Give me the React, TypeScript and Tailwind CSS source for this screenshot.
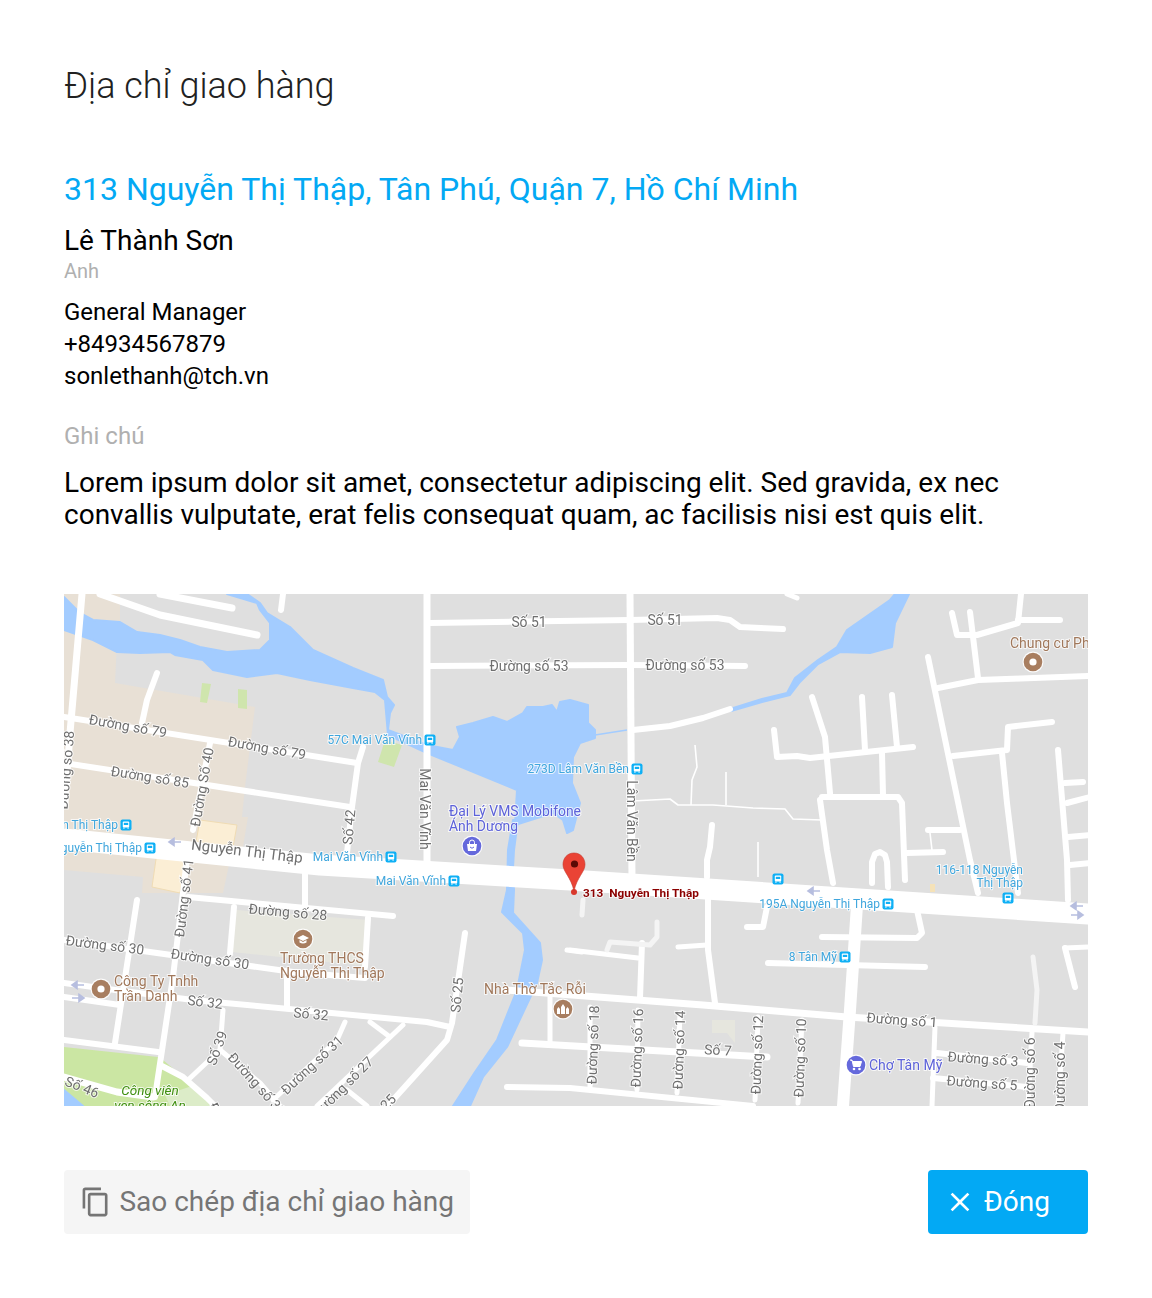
import { Fragment } from 'react';

// map roads in page coordinates: [points, width]
const roads: [string, number][] = [
  ['64,839 320,865 570,880 1088,914', 21],
  ['427,594 427,872', 7],
  ['630,594 632,880', 7],
  ['430,623 630,620 717,618 730,620 740,627 783,629', 6],
  ['430,666 630,665 745,666', 6],
  ['633,730 670,726 703,718 730,709', 6],
  ['787,594 797,598', 5],
  ['952,613 957,635 977,635 1018,623 1021,594', 6],
  ['1018,620 1060,620', 6],
  ['970,612 978,678', 6],
  ['928,657 970,860 978,893', 6],
  ['938,688 978,680 1090,676', 6],
  ['1052,722 1008,727 1007,750 953,756', 6],
  ['1002,753 1007,803 1018,893', 6],
  ['1058,750 1067,860 1068,900', 6],
  ['1065,783 1083,782', 6],
  ['1067,803 1090,797', 6],
  ['1068,837 1090,835', 6],
  ['1070,865 1090,863', 6],
  ['812,697 825,737 830,793', 6],
  ['862,697 865,750', 6],
  ['892,695 897,747', 6],
  ['774,730 777,757 797,756 810,758 913,747', 6],
  ['882,753 883,795', 6],
  ['822,797 898,797 902,803 905,880', 6],
  ['820,800 827,850 833,883', 6],
  ['928,830 960,830', 6],
  ['907,853 943,852', 6],
  ['872,883 872,862 875,854 880,852 885,855 887,862 888,887', 6],
  ['712,825 710,847 707,860 707,877', 6],
  ['708,898 708,950 715,1003', 6],
  ['678,947 707,945', 5],
  ['747,927 763,927 767,907', 6],
  ['822,937 917,938 922,933 917,910', 6],
  ['768,963 925,967', 6],
  ['857,905 850,1010 843,1106', 12],
  ['505,990 703,1005 847,1017 1088,1032', 7],
  ['567,950 582,952', 5],
  ['522,1043 767,1057', 7],
  ['507,1087 570,1088 753,1106', 6],
  ['550,997 550,1043', 5],
  ['642,943 640,998', 6],
  ['570,950 638,958', 5],
  ['590,1007 590,1087', 5],
  ['638,1010 637,1090', 5],
  ['680,1013 677,1093', 5],
  ['758,1017 755,1100', 5],
  ['802,1020 798,1103', 5],
  ['935,1027 932,1106', 5],
  ['937,1053 1027,1063', 6],
  ['933,1078 1027,1087', 6],
  ['1032,1032 1028,1106', 5],
  ['1063,1033 1058,1106', 5],
  ['1065,948 1075,987', 6],
  ['1065,948 1090,947', 5],
  ['82,594 70,733 65,803', 7],
  ['100,594 160,615 257,635', 7],
  ['160,594 232,608', 7],
  ['283,594 281,610', 6],
  ['157,673 147,700 142,723', 6],
  ['64,717 357,763', 6],
  ['64,763 350,807', 6],
  ['363,747 358,763 352,807 347,853', 6],
  ['210,743 193,830', 6],
  ['188,850 173,977 155,1097', 6],
  ['137,900 115,1043', 6],
  ['188,897 393,916', 6],
  ['305,870 305,907', 6],
  ['234,907 230,953', 6],
  ['368,918 365,967', 6],
  ['64,940 293,972 365,978', 6],
  ['287,977 287,1007', 6],
  ['64,983 100,988', 6],
  ['64,997 120,1005', 6],
  ['193,1000 427,1022 450,1027', 6],
  ['100,988 193,1000', 6],
  ['223,1010 220,1050', 5],
  ['220,1050 188,1080', 5],
  ['220,1050 260,1083 280,1106', 5],
  ['345,1022 337,1040 273,1100', 5],
  ['370,1022 390,1037', 5],
  ['403,1025 317,1106', 5],
  ['465,933 452,1023 447,1040 393,1100 387,1106', 6],
  ['347,1090 367,1106', 5],
  ['64,1040 158,1052', 6],
  ['160,1065 183,1077 207,1098 215,1106', 6],
  ['64,1077 117,1092 153,1097', 7],
];

const thinRoads = [
  '633,801 670,799 678,805 713,805 753,808 785,809 793,819 822,820',
  '695,745 697,767 692,780 691,805',
  '726,772 726,805',
  '758,842 758,877',
  '930,833 932,850',
];

const lightRoads = [
  '583,900 582,915',
  '657,922 657,937 650,945 610,942 607,950',
  '1033,957 1037,990 1035,1023',
];

const waterPaths = [
  'M64 597 L80 613 L93 620 L120 622 L137 632 L160 635 L180 640 L200 647 L227 652 L260 650 L270 640 L270 623 L260 610 L257 603 L227 594 L247 594 L260 603 L267 613 L290 627 L313 650 L353 668 L383 680 L387 697 L394 705 L390 713 L388 730 L427 745 L453 750 L460 737 L457 727 L473 723 L493 717 L507 722 L523 713 L527 707 L543 707 L552 705 L557 712 L560 702 L570 700 L588 705 L588 723 L595 730 L595 738 L580 743 L573 757 L572 783 L580 803 L573 830 L567 833 L563 820 L553 813 L515 825 L517 790 L427 753 L388 735 L385 700 L375 692 L353 688 L310 680 L277 673 L247 677 L213 670 L203 660 L175 655 L170 652 L140 653 L117 652 L93 640 L64 630 Z',
  'M730 709 L762 699 L787 693 L795 678 L818 660 L837 647 L847 630 L890 600 L895 594 L909 594 L895 623 L892 647 L870 653 L840 652 L818 664 L800 682 L790 695 L762 702 L731 711 Z',
  'M513 820 L518 820 L514 850 L513 868 L514 890 L513 913 L540 943 L542 960 L537 983 L507 1047 L483 1077 L470 1106 L453 1106 L475 1072 L497 1040 L517 990 L525 950 L523 933 L502 912 L507 890 L508 850 Z',
  'M64 1090 L83 1106 L64 1106 Z',
];

const grey: [string, number, number, number][] = [
  ['Số 51', 529, 622, 0],
  ['Đường số 53', 529, 666, 0],
  ['Số 51', 665, 620, 0],
  ['Đường số 53', 685, 665, 0],
  ['Đường số 79', 128, 726, 10],
  ['Đường số 79', 267, 748, 10],
  ['Đường số 85', 150, 777, 9],
  ['Đường số 38', 66, 770, -85],
  ['Đường Số 40', 202, 787, -80],
  ['Số 42', 349, 827, -85],
  ['Mai Văn Vĩnh', 425, 809, 90],
  ['Lâm Văn Bền', 632, 821, 90],
  ['Đường số 41', 184, 898, -83],
  ['Đường số 28', 288, 912, 5],
  ['Đường số 30', 105, 945, 7],
  ['Đường số 30', 210, 959, 8],
  ['Số 32', 205, 1002, 7],
  ['Số 32', 311, 1014, 5],
  ['Số 39', 217, 1048, -70],
  ['Số 25', 457, 995, -85],
  ['Đường số 31', 312, 1065, -43],
  ['Đường số 27', 343, 1087, -45],
  ['Số 46', 82, 1087, 22],
  ['Đường số 39', 257, 1084, 48],
  ['Đường', 222, 1122, 62],
  ['25', 388, 1102, -45],
  ['Đường số 18', 593, 1045, -88],
  ['Đường số 16', 637, 1048, -88],
  ['Đường số 14', 679, 1050, -88],
  ['Đường số 12', 757, 1055, -88],
  ['Đường số 10', 800, 1058, -88],
  ['Số 7', 718, 1050, 3],
  ['Đường số 1', 902, 1020, 4],
  ['Đường số 3', 983, 1059, 4],
  ['Đường số 5', 982, 1083, 4],
  ['Đường số 6', 1030, 1073, -90],
  ['Đường số 4', 1060, 1077, -90],
];

// text ends just left of its bus icon
const stops: [string, number, number][] = [
  ['57C Mai Văn Vĩnh', 430, 740],
  ['273D Lâm Văn Bền', 637, 769],
  ['Nguyễn Thị Thập', 126, 825],
  ['Nguyễn Thị Thập', 150, 848],
  ['Mai Văn Vĩnh', 391, 857],
  ['Mai Văn Vĩnh', 454, 881],
  ['195A Nguyễn Thị Thập', 888, 904],
  ['8 Tân Mỹ', 845, 957],
];

const arrows: [number, number, boolean][] = [
  [175, 842, false],
  [814, 891, false],
  [1077, 906, false],
  [1077, 915, true],
  [78, 985, false],
  [78, 998, true],
];

function BusIcon({ x, y }: { x: number; y: number }) {
  return (
    <g transform={`translate(${x} ${y})`}>
      <rect x={-5.5} y={-5.5} width={11} height={11} rx={2} fill="#0fb0f5" />
      <rect x={-3.2} y={-3.4} width={6.4} height={6} rx={1} fill="#fff" />
      <rect x={-2.2} y={-2.2} width={4.4} height={2.2} fill="#0fb0f5" />
      <rect x={-2.8} y={2.6} width={1.4} height={1} fill="#fff" />
      <rect x={1.4} y={2.6} width={1.4} height={1} fill="#fff" />
    </g>
  );
}

function Poi({ x, y, color, children }: { x: number; y: number; color: string; children?: React.ReactNode }) {
  return (
    <g transform={`translate(${x} ${y})`}>
      <circle r={10.5} fill="#fff" opacity={0.9} />
      <circle r={9.3} fill={color} />
      {children}
    </g>
  );
}

function Label({ x, y, color, size = 13.9, anchor = 'start', rot = 0, bold, italic, children }: {
  x: number;
  y: number;
  color: string;
  size?: number;
  anchor?: 'start' | 'middle' | 'end';
  rot?: number;
  bold?: boolean;
  italic?: boolean;
  children: string;
}) {
  return (
    <text
      x={x}
      y={y}
      dy="0.35em"
      fontSize={size}
      fill={color}
      textAnchor={anchor}
      fontWeight={bold ? 700 : 400}
      fontStyle={italic ? 'italic' : 'normal'}
      stroke="#fff"
      strokeWidth={2}
      strokeOpacity={0.75}
      paintOrder="stroke"
      className="whitespace-pre"
      transform={rot ? `rotate(${rot} ${x} ${y})` : undefined}
    >
      {children}
    </text>
  );
}

function ShippingMap() {
  return (
    <svg viewBox="64 594 1024 512" className="block h-[512px] w-[1024px] font-['Roboto',sans-serif] blur-[0.35px]">
      <rect x={64} y={594} width={1024} height={512} fill="#dfdfdf" />

      {/* land use */}
      <path d="M64 620 L117 640 L115 683 L255 707 L245 787 L242 817 L248 817 L243 847 L230 860 L223 893 L142 893 L143 877 L64 870 Z" fill="#e8e0d5" />
      <path d="M64 594 H120 V625 H64 Z" fill="#e8e0d5" />
      <path d="M200 820 L237 825 L233 847 L196 842 Z" fill="#fbeed5" stroke="#f0dcb4" />
      <path d="M157 852 L187 855 L180 893 L152 887 Z" fill="#fbeed5" stroke="#f0dcb4" />
      <path d="M236 910 L368 920 L365 966 L232 952 Z" fill="#e6e6de" />
      <path d="M712 1020 L735 1020 L735 1043 L727 1033 L712 1033 Z" fill="#e6e6de" />
      <path d="M64 1047 L158 1057 L163 1060 L207 1097 L210 1106 H64 Z" fill="#cbe6a3" />
      <path d="M165 1095 L195 1085 L210 1106 H170 Z" fill="#dcecc8" />
      <path d="M202 683 L211 684 L207 703 L200 702 Z" fill="#cfe5ad" />
      <path d="M238 689 L247 690 L247 709 L238 708 Z" fill="#cfe5ad" />
      <path d="M385 740 L402 745 L394 767 L378 762 Z" fill="#cfe5ad" />
      <rect x={930} y={884} width={5} height={8} fill="#f5e2b8" />

      {waterPaths.map((d, i) => (
        <path key={i} d={d} fill="#a3ccff" stroke="#a3ccff" strokeWidth={2} strokeLinejoin="round" />
      ))}
      <polyline points="595,735 627,730" fill="none" stroke="#a3ccff" strokeWidth={1.6} />

      {roads.map(([pts, w], i) => (
        <polyline key={i} points={pts} fill="none" stroke="#fff" strokeWidth={w} strokeLinecap="round" strokeLinejoin="round" />
      ))}
      {lightRoads.map((pts, i) => (
        <polyline key={i} points={pts} fill="none" stroke="#f4f4f4" strokeWidth={5} strokeLinecap="round" strokeLinejoin="round" />
      ))}
      {thinRoads.map((pts, i) => (
        <polyline key={i} points={pts} fill="none" stroke="#fff" strokeWidth={1.6} strokeLinejoin="round" />
      ))}

      {arrows.map(([x, y, right], i) => (
        <path
          key={i}
          d={right ? `M${x - 6} ${y} H${x + 3} M${x + 1} ${y - 3.5} L${x + 6} ${y} L${x + 1} ${y + 3.5} Z` : `M${x + 6} ${y} H${x - 3} M${x - 1} ${y - 3.5} L${x - 6} ${y} L${x - 1} ${y + 3.5} Z`}
          stroke="#b7bedf"
          strokeWidth={1.6}
          fill="#b7bedf"
        />
      ))}

      {grey.map(([t, x, y, rot], i) => (
        <Label key={i} x={x} y={y} rot={rot} anchor="middle" color="#6f6f6f">
          {t}
        </Label>
      ))}
      <Label x={247} y={851} rot={7} anchor="middle" size={15} color="#6f6f6f">
        Nguyễn Thị Thập
      </Label>

      {stops.map(([t, x, y], i) => (
        <Fragment key={i}>
          <Label x={x - 8} y={y} anchor="end" size={12} color="#3fa6dd">
            {t}
          </Label>
          <BusIcon x={x} y={y} />
        </Fragment>
      ))}
      <BusIcon x={778} y={879} />
      <BusIcon x={1008} y={898} />
      <Label x={1023} y={870} anchor="end" size={12} color="#3fa6dd">
        116-118 Nguyễn
      </Label>
      <Label x={1023} y={883} anchor="end" size={12} color="#3fa6dd">
        Thị Thập
      </Label>

      {/* places */}
      <Label x={1010} y={643} color="#a1785b" size={14}>Chung cư Phú</Label>
      <Poi x={1033} y={662} color="#a87e60">
        <circle r={3.6} fill="#fff" />
      </Poi>
      <Label x={114} y={981} color="#a1785b" size={14}>Công Ty Tnhh</Label>
      <Label x={114} y={996} color="#a1785b" size={14}>Trần Danh</Label>
      <Poi x={101} y={989} color="#a87e60">
        <circle r={3.6} fill="#fff" />
      </Poi>
      <Poi x={303} y={939} color="#a87e60">
        <path d="M-6 -1 L0 -4 L6 -1 L0 2 Z" fill="#fff" />
        <path d="M-3.5 1 V3.5 Q0 5.5 3.5 3.5 V1 L0 3 Z" fill="#fff" />
      </Poi>
      <Label x={280} y={958} color="#a1785b" size={14}>Trường THCS</Label>
      <Label x={280} y={973} color="#a1785b" size={14}>Nguyễn Thị Thập</Label>
      <Label x={484} y={989} color="#a1785b" size={14}>Nhà Thờ Tắc Rỗi</Label>
      <Poi x={563} y={1009} color="#a87e60">
        <path d="M-6 5 V0 L-4.5 -2 L-3 0 V5 Z M-2 5 V-2 L0 -5 L2 -2 V5 Z M3 5 V0 L4.5 -2 L6 0 V5 Z" fill="#fff" />
      </Poi>
      <Label x={449} y={811} color="#5d62d9" size={13.9}>Đại Lý VMS Mobifone</Label>
      <Label x={449} y={826} color="#5d62d9" size={13.9}>Ánh Dương</Label>
      <Poi x={472} y={846} color="#6569dc">
        <path d="M-5 -2 H5 L4 5 H-4 Z" fill="#fff" />
        <path d="M-2.5 -2 V-3.5 A2.5 2.5 0 0 1 2.5 -3.5 V-2" fill="none" stroke="#fff" />
        <path d="M-2 1 Q0 3.5 2 1" fill="none" stroke="#6569dc" />
      </Poi>
      <Poi x={856} y={1065} color="#6569dc">
        <path d="M-6 -5 H-4 L-2.5 1.5 H4 L5.5 -3.5 H-3.5" fill="#fff" stroke="#fff" strokeWidth={1} />
        <circle cx={-2} cy={4} r={1.3} fill="#fff" />
        <circle cx={3.5} cy={4} r={1.3} fill="#fff" />
      </Poi>
      <Label x={869} y={1065} color="#5d62d9" size={14}>Chợ Tân Mỹ</Label>
      <Label x={150} y={1090} anchor="middle" italic color="#3f8f10" size={13.5}>Công viên</Label>
      <Label x={150} y={1105} anchor="middle" italic color="#3f8f10" size={13.5}>ven sông An</Label>

      {/* pin */}
      <circle cx={574} cy={892} r={3} fill="#d9382c" />
      <path d="M574 853 C566.500 853 563 859 563 864.500 C563 872 571 877 574 891 C577 877 585 872 585 864.500 C585 859 581.500 853 574 853 Z" fill="#ea4335" stroke="#c5352a" strokeWidth={0.6} />
      <circle cx={574.500} cy={864} r={3.600} fill="#5a0a05" />
      <Label x={583} y={892.500} color="#8b0000" size={11.8} bold>{'313  Nguyễn Thị Thập'}</Label>
    </svg>
  );
}

export default function App() {
  return (
    <div className="flex min-h-[1298px] w-[1152px] flex-col bg-white p-16 font-['Roboto',sans-serif] text-black">
      <h1 className="text-[36px] leading-[44px] font-light text-[#212121]">Địa chỉ giao hàng</h1>

      <p className="mt-[58px] text-[32px] leading-[46px] text-[#03a9f4]">313 Nguyễn Thị Thập, Tân Phú, Quận 7, Hồ Chí Minh</p>
      <p className="mt-[9px] text-[28px] leading-[40px]">Lê Thành Sơn</p>
      <p className="-mt-px text-[20px] leading-[22px] text-[#b0b0b0]">Anh</p>
      <div className="mt-[14px] text-2xl leading-8">
        <p>General Manager</p>
        <p>+84934567879</p>
        <p>sonlethanh@tch.vn</p>
      </div>
      <p className="mt-[28px] text-2xl leading-8 text-[#b0b0b0]">Ghi chú</p>
      <p className="mt-[15px] text-[28px] leading-8">
        Lorem ipsum dolor sit amet, consectetur adipiscing elit. Sed gravida, ex nec convallis vulputate, erat felis consequat quam, ac facilisis nisi est quis elit.
      </p>

      <div className="mt-[63px]">
        <ShippingMap />
      </div>

      <div className="mt-16 flex justify-between">
        <button className="flex h-16 w-[406px] items-center gap-2 rounded bg-[#f5f5f5] px-4 text-[28px] whitespace-nowrap text-[#757575]">
          <svg viewBox="0 0 24 24" className="h-8 w-8 fill-[#757575]">
            <path d="M16 1H4c-1.100 0-2 .9-2 2v14h2V3h12V1zm3 4H8c-1.100 0-2 .9-2 2v14c0 1.100.9 2 2 2h11c1.100 0 2-.9 2-2V7c0-1.100-.9-2-2-2zm0 16H8V7h11v14z" />
          </svg>
          Sao chép địa chỉ giao hàng
        </button>
        <button className="flex h-16 w-40 items-center gap-2 rounded bg-[#03a9f4] px-4 text-[28px] text-white">
          <svg viewBox="0 0 24 24" className="h-8 w-8 fill-white">
            <path d="M19 6.410 17.590 5 12 10.590 6.410 5 5 6.410 10.590 12 5 17.590 6.410 19 12 13.410 17.590 19 19 17.590 13.410 12z" />
          </svg>
          Đóng
        </button>
      </div>
    </div>
  );
}
